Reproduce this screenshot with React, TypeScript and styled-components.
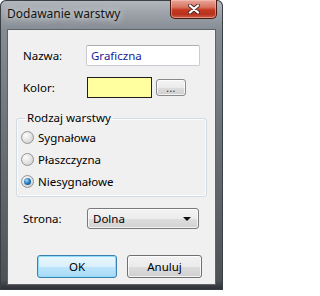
import React from "react";
import styled, { createGlobalStyle } from "styled-components";

const Global = createGlobalStyle`
  html, body { margin: 0; padding: 0; background: #ffffff; }
  body { font-family: "Noto Sans", "Open Sans", sans-serif; font-size: 11.5px; }
  #root { width: 223px; height: 296px; overflow: hidden; }
`;

const Win = styled.div`
  width: 223px;
  height: 290px;
  box-sizing: border-box;
  display: flex;
  flex-direction: column;
  padding: 0 7px 5px 7px;
  border-radius: 6px 6px 0 0;
  background: linear-gradient(180deg, #b4b9be 0px, #9ba1a7 14px, #868c93 30px, #6f757c 120px, #4d5257 280px, #2a2e32 290px);
  box-shadow: inset 0 0 0 1px #3a3f44;
`;

const TitleBar = styled.div`
  height: 29px;
  display: flex;
  align-items: flex-start;
  justify-content: space-between;
`;

const Title = styled.span`
  margin-top: 6px;
  line-height: 16px;
  font-size: 12px;
  color: #141414;
  text-shadow: 0 0 6px rgba(230, 232, 235, 0.9), 0 0 10px rgba(230, 232, 235, 0.7);
`;

const CloseBtn = styled.div`
  width: 47px;
  height: 19px;
  margin-right: -1px;
  box-sizing: border-box;
  border: 1px solid #4a1a12;
  border-top: none;
  border-radius: 0 0 5px 5px;
  background: linear-gradient(180deg, #e8a89c 0%, #d9735f 40%, #c5381f 55%, #b8321d 80%, #d0604a 100%);
  box-shadow: inset 0 0 0 1px rgba(255, 200, 190, 0.5);
  display: flex;
  align-items: center;
  justify-content: center;
`;

const Client = styled.div`
  flex: 1;
  box-sizing: border-box;
  background: #f0f0f0;
  border: 1px solid #5d6369;
  display: flex;
  flex-direction: column;
  padding: 15px 0 0 0;
`;

const Row = styled.div<{ $mt?: number }>`
  display: flex;
  align-items: center;
  height: 21px;
  padding-left: 15px;
  margin-top: ${(p) => p.$mt ?? 0}px;
`;

const Label = styled.span<{ $w: number }>`
  width: ${(p) => p.$w}px;
  color: #000;
`;

const TextInput = styled.div`
  width: 114px;
  height: 21px;
  box-sizing: border-box;
  border: 1px solid #c7ccd3;
  border-top-color: #abadb3;
  border-radius: 2px;
  background: #fff;
  padding-left: 4px;
  display: flex;
  align-items: center;
  color: #1c1c96;
`;

const ColorBox = styled.div`
  width: 65px;
  height: 21px;
  box-sizing: border-box;
  border: 1px solid #1e1e1e;
  background: #ffffa0;
`;

const SmallBtn = styled.div`
  width: 30px;
  height: 17px;
  margin-left: 4px;
  box-sizing: border-box;
  border: 1px solid #8a8a8a;
  border-radius: 3px;
  background: linear-gradient(180deg, #f4f4f4 0%, #ebebeb 50%, #dddddd 51%, #cfcfcf 100%);
  box-shadow: inset 0 0 0 1px rgba(255, 255, 255, 0.7);
  display: flex;
  align-items: center;
  justify-content: center;
  font-size: 10px;
  line-height: 10px;
  color: #222;
  letter-spacing: 0.5px;
`;

const Group = styled.fieldset`
  margin: 13px 8px 0 8px;
  padding: 1px 0 4px 4px;
  border: 1px solid #d2dbe2;
  border-radius: 3px;
  box-shadow: inset 0 0 0 1px #fbfcfd;
  display: flex;
  flex-direction: column;
`;

const Legend = styled.legend`
  margin-left: 4px;
  padding: 0 2px;
  line-height: 14px;
  color: #000;
`;

const RadioRow = styled.div`
  height: 22px;
  display: flex;
  align-items: center;
  gap: 4px;
  color: #000;
`;

const RadioDot = styled.span<{ $checked?: boolean }>`
  width: 13px;
  height: 13px;
  box-sizing: border-box;
  border-radius: 50%;
  border: 1px solid #949494;
  background: radial-gradient(circle at 35% 30%, #fcfcfc 0%, #e6e6e6 45%, #c9c9c9 100%);
  display: flex;
  align-items: center;
  justify-content: center;
  &::after {
    content: "";
    width: 7px;
    height: 7px;
    border-radius: 50%;
    background: radial-gradient(circle at 38% 35%, #a6dcf8 0%, #2a7fc4 45%, #0e3d6c 100%);
    display: ${(p) => (p.$checked ? "block" : "none")};
  }
`;

const Select = styled.div`
  width: 112px;
  height: 21px;
  box-sizing: border-box;
  border: 1px solid #7a7a7a;
  border-radius: 3px;
  background: linear-gradient(180deg, #f4f4f4 0%, #ececec 50%, #dedede 51%, #d2d2d2 100%);
  box-shadow: inset 0 0 0 1px rgba(255, 255, 255, 0.7);
  display: flex;
  align-items: center;
  justify-content: space-between;
  padding: 0 7px 0 5px;
  color: #000;
`;

const Arrow = styled.span`
  width: 0;
  height: 0;
  border-left: 4px solid transparent;
  border-right: 4px solid transparent;
  border-top: 4px solid #111;
`;

const Buttons = styled.div`
  display: flex;
  gap: 10px;
  margin: 26px 0 0 29px;
`;

const Btn = styled.div<{ $w: number; $default?: boolean }>`
  width: ${(p) => p.$w}px;
  height: 23px;
  box-sizing: border-box;
  border-radius: 3px;
  border: 1px solid ${(p) => (p.$default ? "#3c7fb1" : "#707070")};
  background: ${(p) =>
    p.$default
      ? "linear-gradient(180deg, #eaf6fd 0%, #d9f0fc 50%, #bee6fd 51%, #a7d9f5 100%)"
      : "linear-gradient(180deg, #f2f2f2 0%, #ebebeb 50%, #dddddd 51%, #cfcfcf 100%)"};
  box-shadow: inset 0 0 0 1px ${(p) => (p.$default ? "#8fdcf9" : "rgba(255,255,255,0.75)")};
  display: flex;
  align-items: center;
  justify-content: center;
  color: #000;
`;

export default function App() {
  return (
    <>
      <Global />
      <Win>
        <TitleBar>
          <Title>Dodawanie warstwy</Title>
          <CloseBtn>
            <svg width="12" height="10" viewBox="0 0 12 10">
              <path d="M2 1.5 L10 8.5 M10 1.5 L2 8.5" stroke="#4a2a26" strokeWidth="4" strokeLinecap="round" />
              <path d="M2 1.5 L10 8.5 M10 1.5 L2 8.5" stroke="#ffffff" strokeWidth="2.3" strokeLinecap="round" />
            </svg>
          </CloseBtn>
        </TitleBar>
        <Client>
          <Row>
            <Label $w={63}>Nazwa:</Label>
            <TextInput>Graficzna</TextInput>
          </Row>
          <Row $mt={11}>
            <Label $w={64}>Kolor:</Label>
            <ColorBox />
            <SmallBtn>...</SmallBtn>
          </Row>
          <Group>
            <Legend>Rodzaj warstwy</Legend>
            <RadioRow>
              <RadioDot />
              Sygnałowa
            </RadioRow>
            <RadioRow>
              <RadioDot />
              Płaszczyzna
            </RadioRow>
            <RadioRow>
              <RadioDot $checked />
              Niesygnałowe
            </RadioRow>
          </Group>
          <Row $mt={11}>
            <Label $w={64}>Strona:</Label>
            <Select>
              Dolna
              <Arrow />
            </Select>
          </Row>
          <Buttons>
            <Btn $w={80} $default>
              OK
            </Btn>
            <Btn $w={75}>Anuluj</Btn>
          </Buttons>
        </Client>
      </Win>
    </>
  );
}
